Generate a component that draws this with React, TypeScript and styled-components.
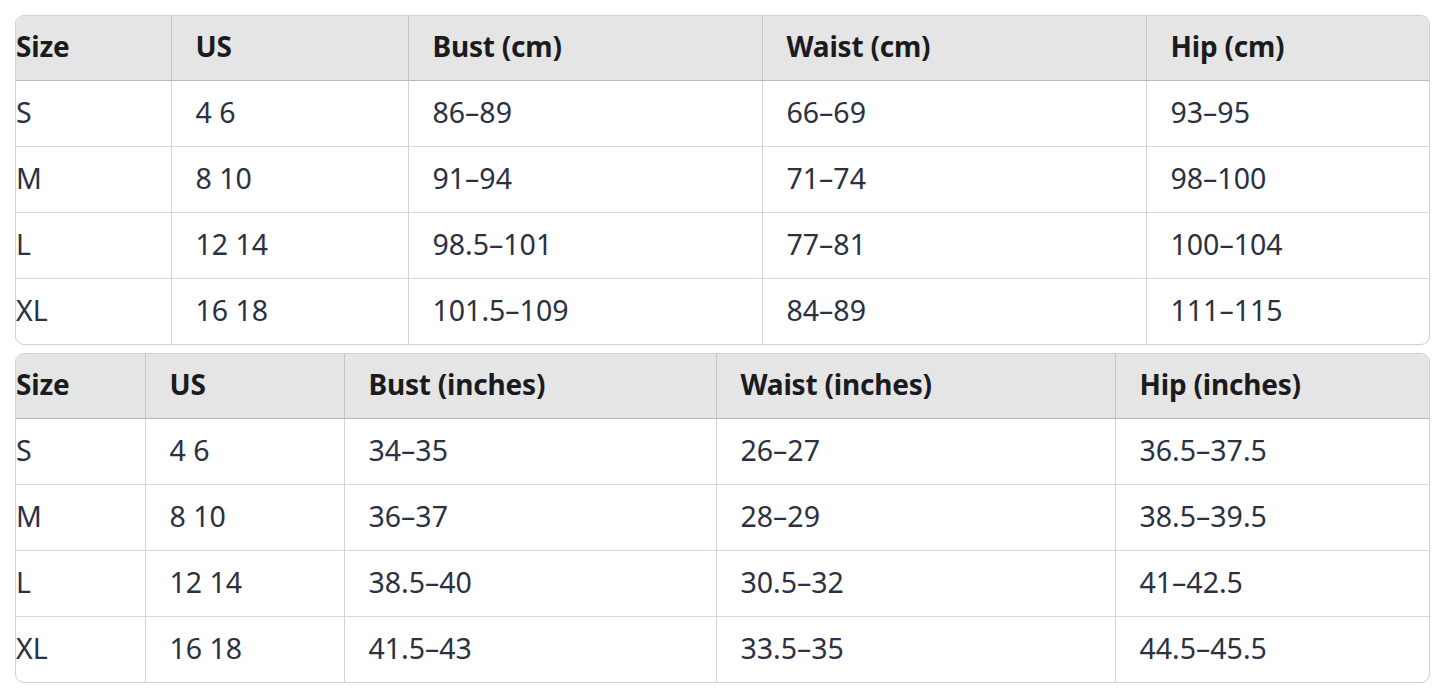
import React from 'react'
import styled, { createGlobalStyle } from 'styled-components'

const GlobalStyle = createGlobalStyle`
  html, body {
    margin: 0;
    padding: 0;
    background: #ffffff;
  }
  body {
    font-family: 'Noto Sans', 'Open Sans', 'Liberation Sans', sans-serif;
  }
`

const Page = styled.div`
  display: flex;
  flex-direction: column;
  gap: 8px;
  padding: 15px 15px 0 15px;
  width: 1415px;
`

const Frame = styled.div`
  border: 1px solid #cdd0d6;
  border-radius: 9px;
  overflow: hidden;
`

const Table = styled.table`
  width: 100%;
  border-collapse: collapse;
  table-layout: fixed;
`

const HeadCell = styled.th<{ first?: boolean }>`
  height: 62px;
  padding: 0 0 2px ${({ first }) => (first ? '0' : '24px')};
  background: #e5e5e5;
  border-bottom: 1px solid #b9b9bb;
  border-left: ${({ first }) => (first ? 'none' : '1px solid #c4c6ca')};
  text-align: left;
  font-size: 28px;
  line-height: 1.2;
  font-weight: 700;
  color: #1b1b1f;
  letter-spacing: -0.2px;
  white-space: nowrap;
`

const Cell = styled.td<{ first?: boolean }>`
  height: 63px;
  padding: 0 0 2px ${({ first }) => (first ? '0' : '24px')};
  border-top: 1px solid #d6d9df;
  border-left: ${({ first }) => (first ? 'none' : '1px solid #d0d3d9')};
  font-size: 28.5px;
  line-height: 1.2;
  font-weight: 400;
  color: #2a3142;
  white-space: nowrap;
  tr:first-child > & {
    border-top: none;
  }
`

type Chart = {
  widths: number[]
  head: string[]
  rows: string[][]
}

const charts: Chart[] = [
  {
    widths: [155, 237, 354, 384, 285],
    head: ['Size', 'US', 'Bust (cm)', 'Waist (cm)', 'Hip (cm)'],
    rows: [
      ['S', '4 6', '86–89', '66–69', '93–95'],
      ['M', '8 10', '91–94', '71–74', '98–100'],
      ['L', '12 14', '98.5–101', '77–81', '100–104'],
      ['XL', '16 18', '101.5–109', '84–89', '111–115']
    ]
  },
  {
    widths: [129, 199, 372, 399, 316],
    head: ['Size', 'US', 'Bust (inches)', 'Waist (inches)', 'Hip (inches)'],
    rows: [
      ['S', '4 6', '34–35', '26–27', '36.5–37.5'],
      ['M', '8 10', '36–37', '28–29', '38.5–39.5'],
      ['L', '12 14', '38.5–40', '30.5–32', '41–42.5'],
      ['XL', '16 18', '41.5–43', '33.5–35', '44.5–45.5']
    ]
  }
]

function SizeTable({ chart }: { chart: Chart }) {
  return (
    <Frame>
      <Table>
        <colgroup>
          {chart.widths.map((w, i) => (
            <col key={i} width={w} />
          ))}
        </colgroup>
        <thead>
          <tr>
            {chart.head.map((h, i) => (
              <HeadCell key={h} first={i === 0}>
                {h}
              </HeadCell>
            ))}
          </tr>
        </thead>
        <tbody>
          {chart.rows.map(row => (
            <tr key={row[0]}>
              {row.map((v, i) => (
                <Cell key={i} first={i === 0}>
                  {v}
                </Cell>
              ))}
            </tr>
          ))}
        </tbody>
      </Table>
    </Frame>
  )
}

export default function App() {
  return (
    <>
      <GlobalStyle />
      <Page>
        {charts.map((c, i) => (
          <SizeTable key={i} chart={c} />
        ))}
      </Page>
    </>
  )
}
